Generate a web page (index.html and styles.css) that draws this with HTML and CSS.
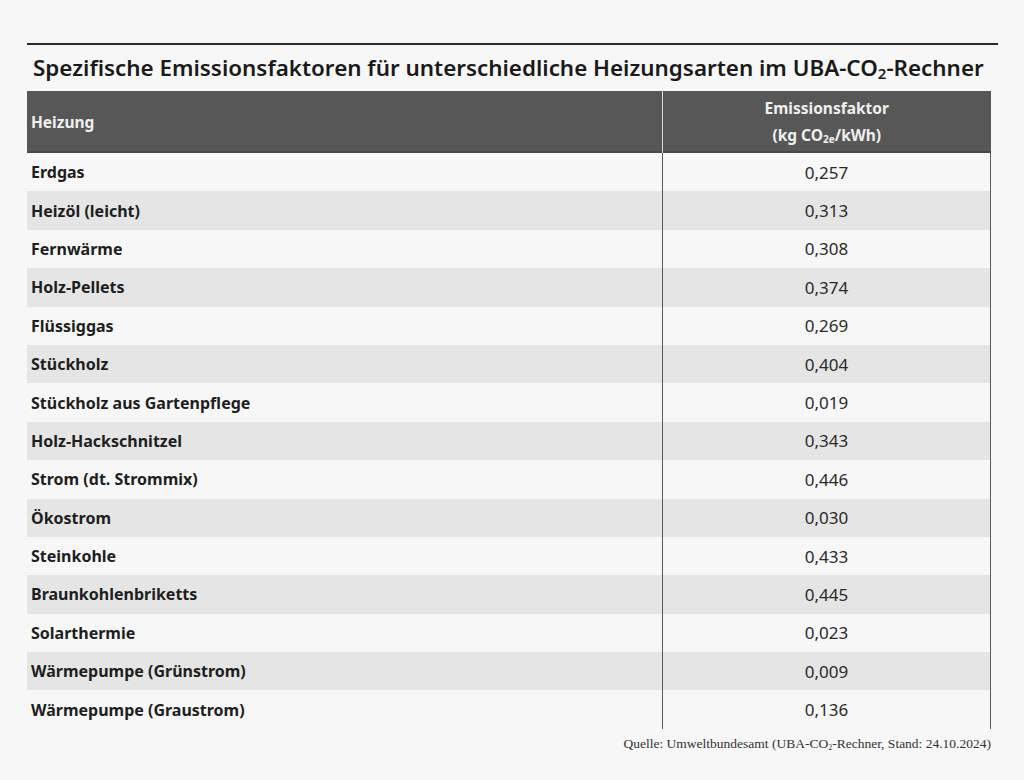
FILE: index.html
```html
<!DOCTYPE html>
<html lang="de">
<head>
<meta charset="utf-8">
<title>Emissionsfaktoren</title>
<link rel="stylesheet" href="styles.css">
</head>
<body>
<div class="page">
  <div class="rule"></div>
  <h1 class="title">Spezifische Emissionsfaktoren für unterschiedliche Heizungsarten im UBA-CO<sub>2</sub>-Rechner</h1>
  <table class="tbl">
    <thead>
      <tr>
        <th class="c-name">Heizung</th>
        <th class="c-val">Emissionsfaktor<br>(kg CO<sub>2e</sub>/kWh)</th>
      </tr>
    </thead>
    <tbody>
      <tr><td class="c-name">Erdgas</td><td class="c-val">0,257</td></tr>
      <tr><td class="c-name">Heizöl (leicht)</td><td class="c-val">0,313</td></tr>
      <tr><td class="c-name">Fernwärme</td><td class="c-val">0,308</td></tr>
      <tr><td class="c-name">Holz-Pellets</td><td class="c-val">0,374</td></tr>
      <tr><td class="c-name">Flüssiggas</td><td class="c-val">0,269</td></tr>
      <tr><td class="c-name">Stückholz</td><td class="c-val">0,404</td></tr>
      <tr><td class="c-name">Stückholz aus Gartenpflege</td><td class="c-val">0,019</td></tr>
      <tr><td class="c-name">Holz-Hackschnitzel</td><td class="c-val">0,343</td></tr>
      <tr><td class="c-name">Strom (dt. Strommix)</td><td class="c-val">0,446</td></tr>
      <tr><td class="c-name">Ökostrom</td><td class="c-val">0,030</td></tr>
      <tr><td class="c-name">Steinkohle</td><td class="c-val">0,433</td></tr>
      <tr><td class="c-name">Braunkohlenbriketts</td><td class="c-val">0,445</td></tr>
      <tr><td class="c-name">Solarthermie</td><td class="c-val">0,023</td></tr>
      <tr><td class="c-name">Wärmepumpe (Grünstrom)</td><td class="c-val">0,009</td></tr>
      <tr><td class="c-name">Wärmepumpe (Graustrom)</td><td class="c-val">0,136</td></tr>
    </tbody>
  </table>
  <p class="source">Quelle: Umweltbundesamt (UBA-CO<sub>2</sub>-Rechner, Stand: 24.10.2024)</p>
</div>
</body>
</html>
```

FILE: styles.css
```css
html, body {
  margin: 0;
  padding: 0;
  background: #f7f7f7;
}
.page {
  padding: 43px 0 0 27px;
  width: 971px;
  font-family: "Noto Sans", "Open Sans", sans-serif;
  color: #1e1e1e;
}
.rule {
  height: 2px;
  background: #2b2b2b;
}
.title {
  margin: 0;
  height: 46px;
  line-height: 46px;
  font-size: 22.4px;
  font-weight: 600;
  padding-left: 6px;
  color: #1a1a1a;
  white-space: nowrap;
}
.title sub {
  font-size: 15px;
  vertical-align: -3px;
  line-height: 0;
}
.tbl {
  width: 964px;
  border-collapse: collapse;
  table-layout: fixed;
}
.tbl th {
  background: #575757;
  color: #efefef;
  font-size: 15.5px;
  font-weight: 700;
  height: 62px;
  padding: 0;
  box-shadow: inset 0 -2px 0 #484848;
}
.tbl th.c-name {
  text-align: left;
  padding-left: 4px;
  width: 631px;
}
.tbl th.c-val {
  text-align: center;
  line-height: 27px;
  border-left: 1px solid #d8d8d8;
}
.tbl th sub {
  font-size: 10px;
  vertical-align: -2px;
  line-height: 0;
}
.tbl td {
  height: 38.4px;
  padding: 0;
}
.tbl td.c-name {
  padding-left: 4px;
  font-size: 16px;
  font-weight: 700;
  color: #1e1e1e;
}
.tbl td.c-val {
  text-align: center;
  font-size: 17px;
  color: #2a2a2a;
  border-left: 1px solid #5a5a5a;
  border-right: 1px solid #5a5a5a;
}
.tbl tbody tr:nth-child(even) td {
  background: #e5e5e5;
}
.source {
  margin: 7px 0 0 0;
  width: 964px;
  text-align: right;
  font-family: "Liberation Serif", serif;
  font-size: 13.5px;
  color: #333;
}
.source sub {
  font-size: 8px;
  vertical-align: -2px;
  line-height: 0;
}
```
